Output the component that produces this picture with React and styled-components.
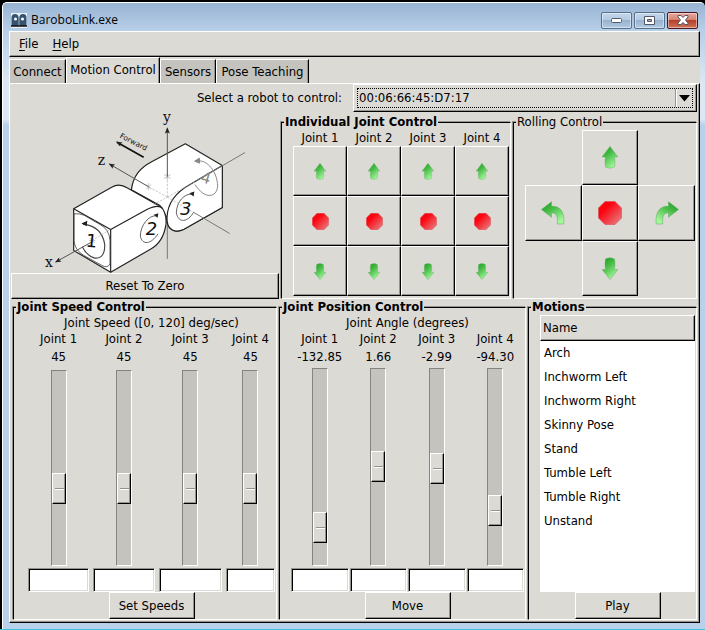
import React, { useState } from "react";
import styled, { createGlobalStyle, css } from "styled-components";

const face = "#dbdad5";
const trough = "#c4c3be";
const shade = "#94938d";

const GlobalStyle = createGlobalStyle`
  *, *::before, *::after { box-sizing: border-box; }
  body {
    margin: 0;
    background: #000;
    color: #000;
    font-family: "DejaVu Sans Condensed", "Noto Sans", sans-serif;
    font-size: 13px;
    line-height: 16px;
  }
  button, input, select { font: inherit; color: inherit; margin: 0; }
`;

const raised = css`
  border: 1px solid;
  border-color: #fff #000 #000 #fff;
  box-shadow: inset -1px -1px 0 ${shade};
`;

const Desktop = styled.div`
  display: flex;
  flex-direction: column;
  min-height: 100vh;
  padding: 2px 0 0 2px;
  background: #000;
  border-bottom: 1px solid #3cc4dc;
`;

const Window = styled.div`
  flex: 1;
  display: flex;
  flex-direction: column;
  padding: 0 5px 6px 6px;
  border-top: 1px solid #fff;
  border-left: 1px solid #fff;
  border-radius: 5px 5px 0 0;
  background: linear-gradient(#98b4d3 0, #b8cfe8 28px, #dce7f4 80px, #dce7f4 116px, #b9d0ea 122px);
`;

const TitleBar = styled.header`
  display: flex;
  align-items: center;
  gap: 4px;
  height: 28px;
  padding: 6px 2px 0;
`;

const Title = styled.h1`
  flex: 1;
  margin: 0;
  font: 400 12px/16px "Open Sans", sans-serif;
`;

const Caption = styled.div`
  display: flex;
  gap: 2px;
`;

const CaptionButton = styled.button`
  display: grid;
  place-items: center;
  width: 31px;
  height: 17px;
  padding: 0;
  border: 1px solid ${(p) => (p.$close ? "#4a1520" : "#566f8d")};
  border-radius: 2px;
  background: ${(p) =>
    p.$close
      ? "linear-gradient(#e8a99c 0 , #d58474 45%, #b5402a 50%, #cf7258)"
      : "linear-gradient(#c3d6ea 0, #b4cae2 45%, #98b3cf 50%, #b2cae3)"};
  box-shadow: inset 0 0 0 1px rgba(255, 255, 255, 0.45);
`;

const Client = styled.div`
  flex: 1;
  display: flex;
  flex-direction: column;
  background: ${face};
`;

const MenuBar = styled.nav`
  ${raised}
  display: flex;
  gap: 14px;
  height: 26px;
  padding: 0 9px;
`;

const MenuButton = styled.button`
  padding: 0;
  border: 0;
  background: none;
  u { text-underline-offset: 2px; }
`;

const TabList = styled.div`
  display: flex;
  align-items: flex-end;
  height: 26px;
`;

const Tab = styled.button`
  height: ${(p) => (p.$active ? 26 : 24)}px;
  width: ${(p) => p.$width}px;
  padding: 0;
  padding-bottom: ${(p) => (p.$active ? 2 : 0)}px;
  white-space: nowrap;
  border: solid;
  border-width: 1px 1px 0 1px;
  border-color: #fff #000 #fff #fff;
  background: ${(p) => (p.$active ? face : trough)};
  box-shadow: inset -1px 0 0 ${shade};
`;

const Page = styled.main`
  ${raised}
  flex: 1;
  display: flex;
  flex-direction: column;
  padding: 0 2px 2px 1px;
`;

const RobotPicker = styled.div`
  display: grid;
  grid-template-columns: 332fr 345fr;
  gap: 11px;
  align-items: center;
  label { text-align: right; }
`;

const SelectWrap = styled.div`
  ${raised}
  position: relative;
  height: 28px;
  padding: 3px;
  svg {
    position: absolute;
    right: 6px;
    top: 10px;
    pointer-events: none;
  }
  &::after {
    content: "";
    position: absolute;
    right: 19px;
    top: 4px;
    bottom: 4px;
    border-left: 1px solid ${shade};
    border-right: 1px solid #fff;
  }
`;

const Select = styled.select`
  appearance: none;
  display: block;
  width: 100%;
  height: 100%;
  padding: 0 1px;
  border: 1px dotted #000;
  border-radius: 0;
  background: transparent;
  outline: none;
`;

const TopRow = styled.section`
  display: grid;
  grid-template-columns: 268fr 231fr 185fr;
  gap: 1px;
  height: 187px;
  fieldset { margin-top: 2px; }
`;

const BottomRow = styled.section`
  flex: 1;
  display: grid;
  grid-template-columns: 265fr 248fr 170fr;
  gap: 1px;
  padding-left: 1px;
`;

const RobotPanel = styled.div`
  display: flex;
  flex-direction: column;
  svg { flex: 1; width: 100%; min-height: 0; overflow: visible; }
`;

const PushButton = styled.button`
  ${raised}
  display: grid;
  place-items: center;
  width: ${(p) => p.$width || "auto"};
  height: ${(p) => p.$height || "27px"};
  padding: 0;
  background: ${face};
`;

const Frame = styled.fieldset`
  display: flex;
  flex-direction: column;
  min-width: 0;
  margin: 0 0 0 1px;
  padding: 0 1px 0 ${(p) => p.$indent || 11}px;
  border: 1px solid;
  border-color: #000 #fff #fff #000;
  box-shadow: -1px -1px 0 ${shade};
  legend {
    margin-left: calc(2px - ${(p) => p.$indent || 11}px);
    padding: 0 1px;
    background: ${face};
    font-weight: ${(p) => (p.$plain ? 400 : 700)};
    white-space: nowrap;
  }
`;

const JointGrid = styled.div`
  display: grid;
  grid-template-columns: repeat(4, 1fr);
  grid-template-rows: 16px repeat(3, 50px);
  text-align: center;
`;

const RollingGrid = styled.div`
  display: grid;
  grid-template-columns: repeat(3, 1fr);
  grid-template-rows: 55px 56px 55px;
  grid-template-areas: ". up ." "left stop right" ". down .";
`;

const RollButton = styled(PushButton)`
  grid-area: ${(p) => p.$area};
  height: auto;
`;

const Units = styled.div`
  text-align: center;
`;

const Sliders = styled.div`
  flex: 1;
  display: grid;
  grid-template-columns: ${(p) => p.$columns};
  column-gap: ${(p) => p.$gap}px;
`;

const Column = styled.div`
  display: flex;
  flex-direction: column;
  align-items: center;
  min-width: 0;
  output { margin: 2px 0 ${(p) => p.$space}px; }
`;

const Slider = styled.input`
  appearance: none;
  writing-mode: vertical-lr;
  direction: rtl;
  flex: 1;
  width: 16px;
  min-height: 120px;
  border: 1px solid;
  border-color: #85847e #fff #fff #85847e;
  background: ${trough};
  &::-webkit-slider-runnable-track { width: 14px; }
  &::-webkit-slider-thumb {
    ${raised}
    appearance: none;
    width: 14px;
    height: 31px;
    background:
      linear-gradient(#fff, #fff) 2px 15px / 9px 1px no-repeat,
      linear-gradient(${shade}, ${shade}) 2px 14px / 9px 1px no-repeat,
      ${face};
  }
`;

const Entry = styled.input`
  width: 100%;
  height: 24px;
  margin-top: 2px;
  padding: 0 3px;
  border: 1px solid;
  border-color: ${shade} #fff #fff ${shade};
  border-radius: 0;
  background: #fff;
  box-shadow: inset 1px 1px 0 #000, inset -1px -1px 0 ${face};
  outline: none;
`;

const Actions = styled.div`
  display: flex;
  justify-content: center;
`;

const MotionList = styled.div`
  flex: 1;
  background: #fff;
`;

const MotionTable = styled.table`
  width: 100%;
  border-collapse: separate;
  border-spacing: 0;
  th, td { text-align: left; font-weight: 400; }
  th { ${raised} height: 26px; padding: 0 2px; background: ${face}; }
  td { height: 24px; padding: 0 4px; }
`;

const HiddenSvg = styled.svg`
  position: absolute;
`;

function Gradients() {
  return (
    <HiddenSvg width="0" height="0" aria-hidden="true">
      <defs>
        <linearGradient id="leaf" x1="0" y1="0" x2="0.6" y2="1">
          <stop offset="0" stopColor="#149a18" />
          <stop offset="0.45" stopColor="#48bd48" />
          <stop offset="1" stopColor="#a4f79c" />
        </linearGradient>
        <linearGradient id="ruby" x1="0" y1="0" x2="1" y2="1">
          <stop offset="0.3" stopColor="#fb0410" />
          <stop offset="1" stopColor="#e5888a" />
        </linearGradient>
      </defs>
    </HiddenSvg>
  );
}

const arrowPaths = {
  up: "M8 0 16 10.500H12.500Q13.500 16 12.500 20.500 8 23 3.500 20.500 2.500 16 3.500 10.500H0Z",
  down: "M8 22 16 12H12.500Q13.500 6 12.500 1.500 8 -1 3.500 1.500 2.500 6 3.500 12H0Z",
};

function Arrow({ dir, small }) {
  return (
    <svg width={small ? 12 : 16} height={small ? 17 : 23} viewBox="0 -0.500 16 23" aria-hidden="true">
      <path d={arrowPaths[dir]} fill="url(#leaf)" stroke="#5da65c" strokeWidth="0.400" />
    </svg>
  );
}

function Turn({ right }) {
  return (
    <svg width="24" height="24" viewBox="0 0 24 24" aria-hidden="true">
      <path
        transform={right ? "translate(24 0) scale(-1 1)" : undefined}
        d="M.5 8.500 10.500 .8V5.300C19 4.600 24 11 22.800 23H16.300C17 15.500 15.500 12 10.500 11.800V16.300Z"
        fill="url(#leaf)"
        stroke="#5da65c"
        strokeWidth="0.500"
      />
    </svg>
  );
}

function Stop({ size }) {
  return (
    <svg width={size} height={size} viewBox="0 0 24 24" aria-hidden="true">
      <path d="M7 .5H17L23.500 7V17L17 23.500H7L.5 17V7Z" fill="url(#ruby)" stroke="#d84a50" strokeWidth="0.600" />
    </svg>
  );
}

function Logo() {
  return (
    <svg width="16" height="15" viewBox="0 0 16 15" aria-hidden="true">
      <path d="M0 0H16V15H0Z" fill="#e8eff6" />
      <path d="M.5 13V5Q.5 1 4 1T7.700 5V13ZM8.300 13V5Q8.300 1 12 1T15.500 5V13Z" fill="#35526e" />
      <path d="M0 13H16" stroke="#111" strokeWidth="1.500" />
      <circle cx="4.500" cy="6" r="1.500" fill="#fff" />
      <circle cx="11.500" cy="6" r="1.500" fill="#fff" />
    </svg>
  );
}

function RobotDiagram() {
  return (
    <svg viewBox="33 36 804 480" role="img" aria-label="Robot joints and axes">
      <defs>
        <marker id="tip" viewBox="0 0 10 8" refX="8" refY="4" markerWidth="22" markerHeight="15" markerUnits="userSpaceOnUse" orient="auto">
          <path d="M0 0 10 4 0 8 2 4Z" fill="#222" />
        </marker>
      </defs>
      <path d="M502 475V375" fill="none" stroke="#777" strokeWidth="3" />
      <g fill="#fff" stroke="#222" strokeWidth="3.500" strokeLinejoin="round">
        <path d="M394 268C400 225 421 202 455 184L556 130 667 195V321L550 387C520 400 500 385 500 350L480 315Z" />
        <path d="M667 195 570 252C528 275 503 310 501 350 499 389 526 399 552 386L667 321Z" />
        <path d="M221 325 335 260Q358 247 381 262L470 312C492 319 500 345 498 371 493 407 475 434 450 447L332 515 221 450Z" />
        <path d="M332 387 221 325M332 387V515M332 387 442 326Q476 310 488 324" fill="none" />
      </g>
      <g fill="none" stroke="#444" strokeWidth="2.500">
        <path d="M222 340Q237 338 252 344L300 372Q328 386 330 420V490Q323 505 304 494L250 464Q224 448 222 420Z" />
        <path d="M249 371Q305 377 314 431 316 475 284 473 259 465 247 439" strokeWidth="3.500" />
        <path d="M470 346C446 343 421 375 421 407 427 435 453 432 474 400" />
        <path d="M578 281C553 278 530 303 529 337 535 370 564 365 581 335" />
      </g>
      <path d="m244 369 18-8-2 16ZM461 343l14-5-2 14ZM568 278l15-5-2 15Z" fill="#222" />
      <g fill="none" stroke="#888" strokeWidth="3">
        <path d="M588 181C625 176 652 217 653 257 650 292 614 298 585 252" />
        <path d="m598 173-14 9 15 6Z" fill="#888" />
        <path d="M502 290V228M502 290 446 259M502 290 580 335M502 290 588 242M461 312 502 290M276 420 330 387" stroke="#aaa" strokeWidth="2" strokeDasharray="7 4" />
        <path d="M502 218V238M492 222 512 234M492 234 512 222M438 252 454 266M454 252 438 266M446 248V270M267 420H286M270 413 283 427" stroke="#aaa" strokeWidth="2" />
      </g>
      <g fill="none" stroke="#555" strokeWidth="3">
        <path d="M502 228V84" markerEnd="url(#tip)" />
        <path d="M446 259 329 191" markerEnd="url(#tip)" />
        <path d="M276 424 168 484" markerEnd="url(#tip)" />
        <path d="M580 335 689 399M588 242 735 156" stroke="#777" />
        <path d="M431 170 351 125" stroke="#111" strokeWidth="5" markerEnd="url(#tip)" />
      </g>
      <g fontFamily="DejaVu Serif, serif" fontSize="42" fill="#111">
        <text x="489" y="63">y</text>
        <text x="293" y="192">z</text>
        <text x="135" y="498">x</text>
      </g>
      <text transform="translate(358 111) rotate(27)" fontSize="22" fill="#111" fontFamily="DejaVu Sans, sans-serif">Forward</text>
      <g fontFamily="DejaVu Sans, sans-serif" fontSize="54" fill="#111">
        <text transform="translate(256 438) rotate(6)">1</text>
        <text x="437" y="404" fontStyle="italic">2</text>
        <text x="540" y="342" fontStyle="italic">3</text>
        <text transform="translate(599 244) rotate(16)" fontSize="46" fill="#888">4</text>
      </g>
    </svg>
  );
}

const joints = [1, 2, 3, 4];
const motions = ["Arch", "Inchworm Left", "Inchworm Right", "Skinny Pose", "Stand", "Tumble Left", "Tumble Right", "Unstand"];

function JointSliders({ name, initial, min, max, step, digits, columns, gap, space }) {
  const [values, setValues] = useState(initial);
  const update = (index, value) => setValues(values.map((v, i) => (i === index ? value : v)));
  return (
    <Sliders $columns={columns} $gap={gap}>
      {joints.map((joint, i) => (
        <Column key={joint} $space={space}>
          <label htmlFor={`${name}-${joint}`}>Joint {joint}</label>
          <output htmlFor={`${name}-${joint}`}>{values[i].toFixed(digits)}</output>
          <Slider
            id={`${name}-${joint}`}
            type="range"
            min={min}
            max={max}
            step={step}
            value={values[i]}
            onChange={(e) => update(i, Number(e.target.value))}
          />
          <Entry type="text" aria-label={`Joint ${joint} ${name}`} />
        </Column>
      ))}
    </Sliders>
  );
}

export default function App() {
  return (
    <Desktop>
      <GlobalStyle />
      <Gradients />
      <Window>
        <TitleBar>
          <Logo />
          <Title>BaroboLink.exe</Title>
          <Caption>
            <CaptionButton aria-label="Minimize">
              <svg width="11" height="5"><rect x=".5" y=".5" width="10" height="4" rx="1" fill="#fff" stroke="#535666" /></svg>
            </CaptionButton>
            <CaptionButton aria-label="Maximize">
              <svg width="11" height="9"><path d="M.5 .5H10.500V8.500H.5ZM3.500 3.500V5.500H7.500V3.500Z" fill="#fff" fillRule="evenodd" stroke="#535666" /></svg>
            </CaptionButton>
            <CaptionButton aria-label="Close" $close>
              <svg width="12" height="10"><path d="M1 .5H4L6 2.500 8 .5H11V2L8.500 5 11 8V9.500H8L6 7.500 4 9.500H1V8L3.500 5 1 2Z" fill="#fff" stroke="#535666" /></svg>
            </CaptionButton>
          </Caption>
        </TitleBar>
        <Client>
          <MenuBar>
            <MenuButton><u>F</u>ile</MenuButton>
            <MenuButton><u>H</u>elp</MenuButton>
          </MenuBar>
          <TabList role="tablist">
            <Tab role="tab" $width={57}>Connect</Tab>
            <Tab role="tab" aria-selected="true" $active $width={94}>Motion Control</Tab>
            <Tab role="tab" $width={56}>Sensors</Tab>
            <Tab role="tab" $width={93}>Pose Teaching</Tab>
          </TabList>
          <Page>
            <RobotPicker>
              <label htmlFor="robot">Select a robot to control:</label>
              <SelectWrap>
                <Select id="robot">
                  <option>00:06:66:45:D7:17</option>
                </Select>
                <svg width="11" height="7" aria-hidden="true"><path d="M0 0H11L5.500 6.500Z" /></svg>
              </SelectWrap>
            </RobotPicker>
            <TopRow>
              <RobotPanel>
                <RobotDiagram />
                <PushButton $height="26px">Reset To Zero</PushButton>
              </RobotPanel>
              <Frame>
                <legend>Individual Joint Control</legend>
                <JointGrid>
                  {joints.map((j) => <span key={j}>Joint {j}</span>)}
                  {joints.map((j) => <PushButton key={j} $height="50px" aria-label={`Joint ${j} up`}><Arrow dir="up" small /></PushButton>)}
                  {joints.map((j) => <PushButton key={j} $height="50px" aria-label={`Joint ${j} stop`}><Stop size={17} /></PushButton>)}
                  {joints.map((j) => <PushButton key={j} $height="50px" aria-label={`Joint ${j} down`}><Arrow dir="down" small /></PushButton>)}
                </JointGrid>
              </Frame>
              <Frame $plain>
                <legend>Rolling Control</legend>
                <RollingGrid>
                  <RollButton $area="up" aria-label="Forward"><Arrow dir="up" /></RollButton>
                  <RollButton $area="left" aria-label="Turn left"><Turn /></RollButton>
                  <RollButton $area="stop" aria-label="Stop"><Stop size={24} /></RollButton>
                  <RollButton $area="right" aria-label="Turn right"><Turn right /></RollButton>
                  <RollButton $area="down" aria-label="Backward"><Arrow dir="down" /></RollButton>
                </RollingGrid>
              </Frame>
            </TopRow>
            <BottomRow>
              <Frame $indent={14}>
                <legend>Joint Speed Control</legend>
                <Units>Joint Speed ([0, 120] deg/sec)</Units>
                <JointSliders name="speed" initial={[45, 45, 45, 45]} min={0} max={120} step={1} digits={0} columns="61fr 61fr 63fr 49fr" gap={4} space={5} />
                <Actions><PushButton $width="86px">Set Speeds</PushButton></Actions>
              </Frame>
              <Frame>
                <legend>Joint Position Control</legend>
                <Units>Joint Angle (degrees)</Units>
                <JointSliders name="angle" initial={[-132.85, 1.66, -2.99, -94.3]} min={-180} max={180} step={0.01} digits={2} columns="repeat(4, 1fr)" gap={1} space={3} />
                <Actions><PushButton $width="86px">Move</PushButton></Actions>
              </Frame>
              <Frame>
                <legend>Motions</legend>
                <MotionList>
                  <MotionTable>
                    <thead><tr><th scope="col">Name</th></tr></thead>
                    <tbody>
                      {motions.map((m) => <tr key={m}><td>{m}</td></tr>)}
                    </tbody>
                  </MotionTable>
                </MotionList>
                <Actions><PushButton $width="86px">Play</PushButton></Actions>
              </Frame>
            </BottomRow>
          </Page>
        </Client>
      </Window>
    </Desktop>
  );
}
